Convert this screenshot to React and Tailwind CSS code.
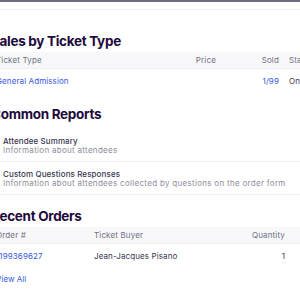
import React from 'react';

const FONT = { fontFamily: 'Inter, "Noto Sans", sans-serif' };

const REPORTS = [
  { title: 'Attendee Summary', sub: 'Information about attendees' },
  { title: 'Custom Questions Responses', sub: 'Information about attendees collected by questions on the order form' },
];

function Heading({ children, className = '' }) {
  return (
    <h2 className={`h-[22px] leading-[22px] text-[13.5px] font-bold tracking-[-0.3px] text-[#1e0a3c] whitespace-nowrap ${className}`}>
      {children}
    </h2>
  );
}

export default function App() {
  return (
    <div className="w-[300px] h-[300px] overflow-hidden bg-white" style={FONT}>
      <div className="h-[2px] bg-[#6f6a7d]" />
      <div className="h-[8px] border-b border-[#eeedf2]" />

      <div className="ml-[-9px] w-[360px]">
        {/* Sales by Ticket Type */}
        <Heading className="mt-[20px]">Sales by Ticket Type</Heading>
        <div className="flex h-[17px] items-center bg-[#f8f7fa] border-b border-[#eeedf2] text-[8px] tracking-[0.15px] text-[#6f7287] whitespace-nowrap">
          <div className="w-[159px] pl-[5px]">Ticket Type</div>
          <div className="w-[66px] text-right">Price</div>
          <div className="w-[63px] text-right">Sold</div>
          <div className="pl-[10px]">Status</div>
        </div>
        <div className="flex h-[24px] items-center text-[8px] tracking-[0.1px] whitespace-nowrap">
          <div className="w-[159px] pl-[5px] text-[#3659e3]">General Admission</div>
          <div className="w-[66px] text-right text-[#39364f]"></div>
          <div className="w-[63px] text-right text-[#3659e3]">1/99</div>
          <div className="pl-[10px] text-[#39364f]">On Sale</div>
        </div>

        {/* Common Reports */}
        <Heading className="mt-[10px]">Common Reports</Heading>
        <div className="mt-[4px] w-[320px]">
          {REPORTS.map(r => (
            <div key={r.title} className="pl-[12px] pt-[7px] pb-[6px] border-b border-[#eeedf2] whitespace-nowrap">
              <div className="leading-[10px] text-[8px] font-medium tracking-[0.1px] text-[#39364f]">{r.title}</div>
              <div className="leading-[9px] text-[8px] tracking-[0.3px] text-[#8f8c9c]">{r.sub}</div>
            </div>
          ))}
        </div>

        {/* Recent Orders */}
        <Heading className="mt-[10px]">Recent Orders</Heading>
        <div className="w-[310px]">
          <div className="flex h-[17px] items-center bg-[#f8f7fa] border-b border-[#eeedf2] text-[8px] tracking-[0.15px] text-[#6f7287] whitespace-nowrap">
            <div className="w-[103px] pl-[5px]">Order #</div>
            <div className="w-[150px]">Ticket Buyer</div>
            <div className="w-[41px] text-right">Quantity</div>
          </div>
          <div className="flex h-[24px] items-center text-[8px] tracking-[0.1px] whitespace-nowrap">
            <div className="w-[103px] pl-[5px] text-[#3659e3]">1199369627</div>
            <div className="w-[150px] text-[#39364f]">Jean-Jacques Pisano</div>
            <div className="w-[41px] text-right text-[#39364f]">1</div>
          </div>
        </div>
        <div className="mt-[4px] pl-[5px] h-[14px] leading-[14px] text-[8px] text-[#3659e3]">View All</div>
      </div>
    </div>
  );
}
